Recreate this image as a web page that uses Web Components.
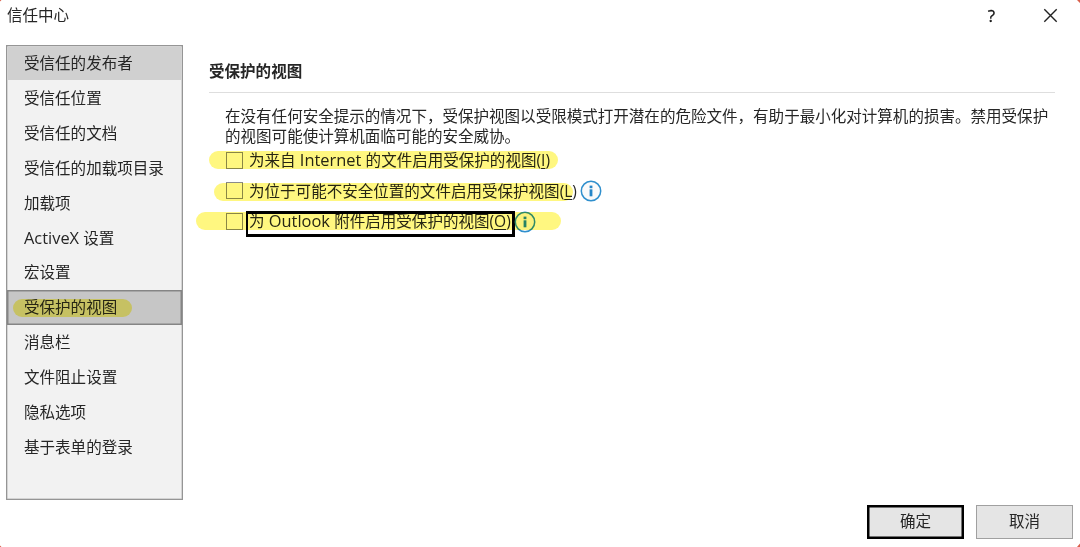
<!DOCTYPE html>
<html lang="zh-CN">
<head>
<meta charset="utf-8">
<title>信任中心</title>
<style>
  body {
    margin: 0;
    background: #fff;
    overflow: hidden;
  }
</style>
</head>
<body>
<trust-dialog></trust-dialog>

<script>
class TitleBar extends HTMLElement {
  constructor() {
    super();
    this.attachShadow({ mode: "open" });
    this.shadowRoot.innerHTML = `
      <style>
        :host {
          display: flex;
          align-items: center;
          height: 31px;
          padding: 0 22px 0 7px;
          flex: none;
        }
        .title { flex: 1; line-height: 31px; }
        .help {
          font-size: 17px;
          line-height: 31px;
          height: 31px;
          color: #111;
          margin-right: 48px;
          -webkit-text-stroke: 0.3px #111;
        }
        svg { display: block; }
      </style>
      <div class="title"><slot></slot></div>
      <span class="help">?</span>
      <svg width="15" height="15" viewBox="0 0 15 15">
        <path d="M1.3 1.3 13.7 13.7M13.7 1.3 1.3 13.7" stroke="#222" stroke-width="1.4" fill="none"/>
      </svg>
    `;
  }
}
customElements.define("title-bar", TitleBar);

class NavItem extends HTMLElement {
  constructor() {
    super();
    this.attachShadow({ mode: "open" });
    this.shadowRoot.innerHTML = `
      <style>
        :host {
          display: block;
          box-sizing: border-box;
          height: 34.91px;
          line-height: 34.6px;
          padding-left: 17px;
          position: relative;
        }
        :host([hot]) {
          background: #d0d0d0;
          background-clip: padding-box;
          border: 1px solid transparent;
          line-height: 32.6px;
          padding-left: 16px;
        }
        :host([selected]) {
          background: #c6c6c6;
          border: 1px solid #858585;
          box-shadow: inset 0 0 0 0.5px #858585;
          line-height: 32.6px;
          padding-left: 16px;
        }
        .marker { display: none; }
        :host([selected]) .marker {
          display: block;
          position: absolute;
          left: 5px;
          top: 8px;
          width: 119px;
          height: 18px;
          border-radius: 9px;
          background: #fff980;
          mix-blend-mode: multiply;
        }
      </style>
      <slot></slot><span class="marker"></span>
    `;
  }
}
customElements.define("nav-item", NavItem);

class NavList extends HTMLElement {
  constructor() {
    super();
    this.attachShadow({ mode: "open" });
    this.shadowRoot.innerHTML = `
      <style>
        :host {
          display: block;
          box-sizing: border-box;
          width: 177px;
          height: 455px;
          flex: none;
          background: #f2f2f2;
          border: 1px solid #959595;
          box-shadow: inset 0 0 0 0.5px #b5b5b5;
        }
      </style>
      <slot></slot>
    `;
  }
}
customElements.define("nav-list", NavList);

class InfoIcon extends HTMLElement {
  constructor() {
    super();
    this.attachShadow({ mode: "open" });
    this.shadowRoot.innerHTML = `
      <style>
        :host { display: block; flex: none; }
        svg { display: block; }
      </style>
      <svg width="22" height="22" viewBox="0 0 22 22">
        <circle cx="11" cy="11" r="9.7" fill="#fafafa" stroke="#2f8fcd" stroke-width="1.5"/>
        <rect x="9.6" y="5.6" width="2.8" height="2.6" fill="#2586c8"/>
        <rect x="9.6" y="9.3" width="2.8" height="7" fill="#2586c8"/>
      </svg>
    `;
  }
}
customElements.define("info-icon", InfoIcon);

// One checkbox line; the --mark-* properties place the highlighter stroke.
class CheckRow extends HTMLElement {
  constructor() {
    super();
    this.attachShadow({ mode: "open" });
    this.shadowRoot.innerHTML = `
      <style>
        :host {
          display: flex;
          align-items: center;
          position: relative;
          height: 22px;
          padding-left: 17px;
        }
        .box {
          box-sizing: border-box;
          width: 17px;
          height: 17px;
          border: 1px solid #8a8a8a;
          background: #fff;
          flex: none;
          margin-right: 6px;
        }
        .label {
          white-space: nowrap;
          height: 22px;
          line-height: 22px;
          position: relative;
        }
        :host([focused]) .label::after {
          content: "";
          position: absolute;
          left: -3px;
          top: 1px;
          width: 269px;
          height: 26px;
          box-sizing: border-box;
          border: 2px solid #000;
          border-width: 3px 3px 3px 2px;
        }
        ::slotted(info-icon) {
          position: absolute;
          top: 0.5px;
          left: var(--icon-left);
        }
        .marker {
          position: absolute;
          left: var(--mark-left);
          top: var(--mark-top, 2px);
          width: var(--mark-width);
          height: 18px;
          border-radius: 9px;
          background: #fff780;
          mix-blend-mode: multiply;
        }
      </style>
      <span class="box"></span>
      <span class="label"><slot></slot></span>
      <slot name="info"></slot>
      <span class="marker"></span>
    `;
  }
}
customElements.define("check-row", CheckRow);

class DialogButton extends HTMLElement {
  constructor() {
    super();
    this.attachShadow({ mode: "open" });
    this.shadowRoot.innerHTML = `
      <style>
        :host {
          display: block;
          text-align: center;
          line-height: 31px;
          box-sizing: border-box;
          width: 97px;
          height: 34px;
          background: #e5e5e5;
          border: 1px solid #a0a0a0;
        }
        :host([primary]) {
          border: 2px solid #000;
          box-shadow: inset 0 0 0 0.5px #000;
          line-height: 29px;
        }
      </style>
      <slot></slot>
    `;
  }
}
customElements.define("dialog-button", DialogButton);

class TrustDialog extends HTMLElement {
  constructor() {
    super();
    this.attachShadow({ mode: "open" });
    this.shadowRoot.innerHTML = `
      <style>
        :host {
          display: flex;
          flex-direction: column;
          position: relative;
          width: 1080px;
          height: 547px;
          background: #fff;
          color: #262626;
          font: 15.54px "Open Sans", "Noto Sans CJK SC", sans-serif;
        }
        .main { display: flex; padding: 14px 25px 0 6px; gap: 26px; }
        .page { flex: 1; min-width: 0; }
        h1 {
          margin: 0;
          padding: 14px 0 9px;
          font-size: 15.54px;
          line-height: 24px;
          font-weight: 700;
          border-bottom: 1px solid #dedede;
        }
        p {
          margin: 13px 0 0 16px;
          line-height: 20px;
          white-space: nowrap;
        }
        .checks { display: flex; flex-direction: column; gap: 8.5px; margin-top: 3px; }
        .buttons {
          display: flex;
          justify-content: flex-end;
          gap: 12px;
          padding: 5px 7px 0 0;
        }
        .corners {
          position: absolute;
          inset: 0;
          pointer-events: none;
        }
        .en { font-size: 16.4px; line-height: 1; }
        u { text-underline-offset: 2px; text-decoration-thickness: 1px; }
      </style>
      <title-bar>信任中心</title-bar>
      <div class="main">
        <nav-list>
          <nav-item hot>受信任的发布者</nav-item>
          <nav-item>受信任位置</nav-item>
          <nav-item>受信任的文档</nav-item>
          <nav-item>受信任的加载项目录</nav-item>
          <nav-item>加载项</nav-item>
          <nav-item><span class="en">ActiveX </span>设置</nav-item>
          <nav-item>宏设置</nav-item>
          <nav-item selected>受保护的视图</nav-item>
          <nav-item>消息栏</nav-item>
          <nav-item>文件阻止设置</nav-item>
          <nav-item>隐私选项</nav-item>
          <nav-item>基于表单的登录</nav-item>
        </nav-list>
        <div class="page">
          <h1>受保护的视图</h1>
          <p>在没有任何安全提示的情况下，受保护视图以受限模式打开潜在的危险文件，有助于最小化对计算机的损害。禁用受保护<br>的视图可能使计算机面临可能的安全威协。</p>
          <div class="checks">
            <check-row style="--mark-left: 0px; --mark-width: 349px">为来自<span class="en"> Internet </span>的文件启用受保护的视图(<u>I</u>)</check-row>
            <check-row style="--mark-left: 5px; --mark-width: 359px; --mark-top: 3px; --icon-left: 370.5px">为位于可能不安全位置的文件启用受保护视图(<u>L</u>)<info-icon slot="info"></info-icon></check-row>
            <check-row focused style="--mark-left: -13px; --mark-width: 365px; --icon-left: 305px">为<span class="en"> Outlook </span>附件启用受保护的视图(<u>O</u>)<info-icon slot="info"></info-icon></check-row>
          </div>
        </div>
      </div>
      <div class="buttons">
        <dialog-button primary>确定</dialog-button>
        <dialog-button>取消</dialog-button>
      </div>
      <svg class="corners" width="1080" height="547" viewBox="0 0 1080 547">
        <path d="M0 0h1.5L0 1.5zM1077 0h3v3zM0 545.5 1.5 547H0zM1080 543.5V547h-3z" fill="#d9604c"/>
      </svg>
    `;
  }
}
customElements.define("trust-dialog", TrustDialog);
</script>
</body>
</html>
